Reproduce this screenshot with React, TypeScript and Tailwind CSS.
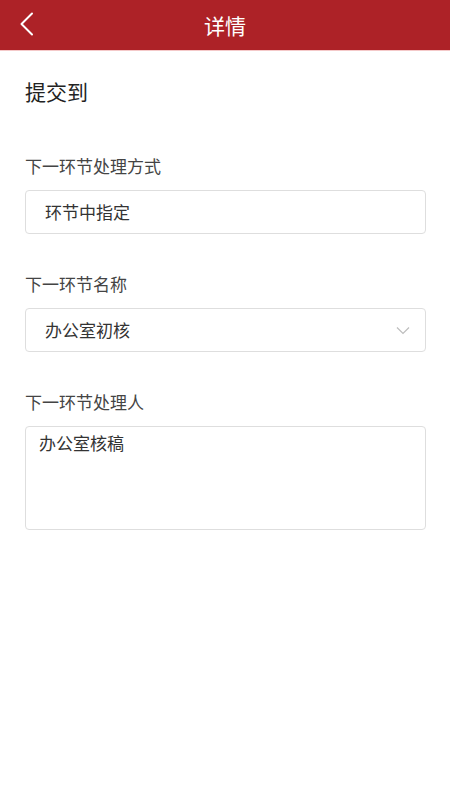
const font = "font-['Noto_Sans_CJK_SC','Noto_Sans',sans-serif]";

function Field({ label, children }: { label: string; children: React.ReactNode }) {
  return (
    <div className="mt-[40px] first:mt-0">
      <div className="text-[17px] leading-[20px] text-[#444]">{label}</div>
      <div className="mt-[14px]">{children}</div>
    </div>
  );
}

export default function App() {
  return (
    <div className={`${font} min-h-[800px] w-[450px] bg-white`}>
      <header className="relative flex h-[50px] items-center justify-center bg-[#ad2227] text-white">
        <svg
          className="absolute left-[19px] top-[12px]"
          width="16"
          height="24"
          viewBox="0 0 16 24"
          fill="none"
          stroke="white"
          strokeWidth="2"
          strokeLinecap="round"
          strokeLinejoin="round"
        >
          <path d="M13 1.5 L2.5 12 L13 22.5" />
        </svg>
        <h1 className="text-[21px] leading-none">详情</h1>
      </header>
      <div className="h-px bg-[#f4c9c9]" />

      <main className="pl-[25px] pr-[24px] pt-[27px]">
        <div className="text-[21px] leading-[26px] text-[#222]">提交到</div>

        <div className="mt-[52px]">
          <Field label="下一环节处理方式">
            <div className="flex h-[44px] items-center rounded-[4px] border border-[#dedede] px-[19px] text-[17px] text-[#333]">
              环节中指定
            </div>
          </Field>

          <Field label="下一环节名称">
            <div className="flex h-[44px] items-center justify-between rounded-[4px] border border-[#dedede] pl-[19px] pr-[15px] text-[17px] text-[#333]">
              <span>办公室初核</span>
              <svg width="14" height="9" viewBox="0 0 14 9" fill="none" stroke="#bdbdbd" strokeWidth="1.2">
                <path d="M1 1.5 L7 7.5 L13 1.5" />
              </svg>
            </div>
          </Field>

          <Field label="下一环节处理人">
            <div className="h-[104px] rounded-[4px] border border-[#dedede] px-[13px] pt-[5px] text-[17px] leading-[22px] text-[#333]">
              办公室核稿
            </div>
          </Field>
        </div>
      </main>
    </div>
  );
}
